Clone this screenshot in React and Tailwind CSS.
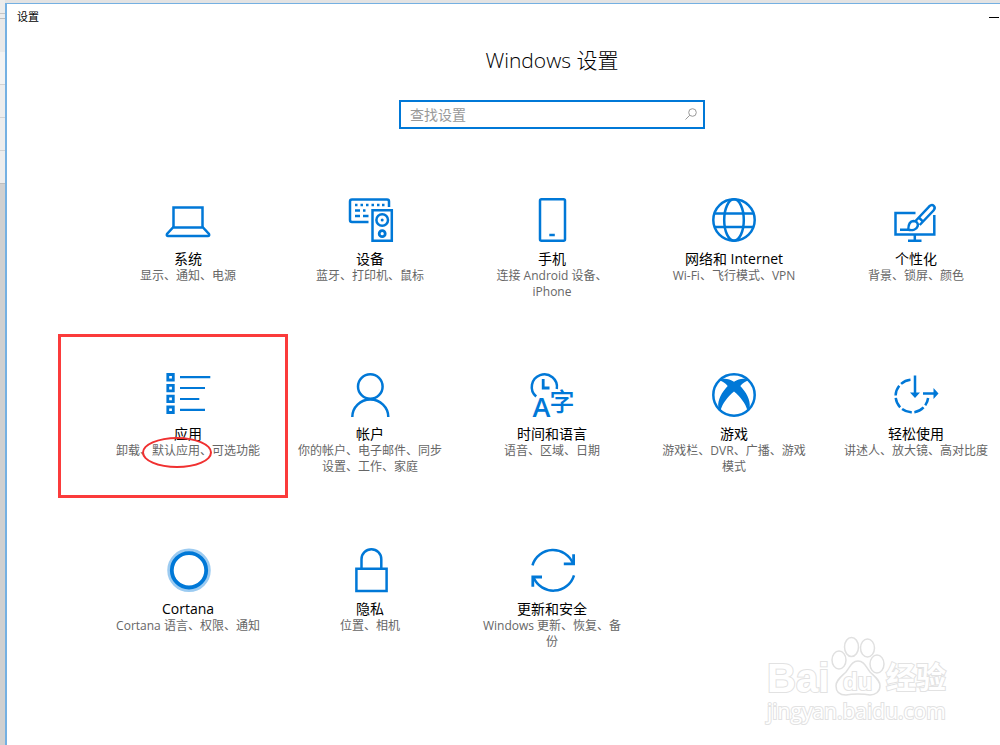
const iconPaths = {
  system: (
    <>
      <path d="M7.500 29.500V9.500h29v20" />
      <path d="M7 29.500h30l6 6.500c.6 1.200 0 2-1 2H2c-1 0-1.600-.8-1-2z" />
    </>
  ),
  devices: (
    <>
      <path d="M20.500 24H4q-2 0-2-2V3.500q0-2 2-2h35q2 0 2 2V9" />
      <path d="M7 7h2.500M12.500 7H15M18 7h2.500M23.500 7H26M29 7h2.500M34 7h2.500M7 12.500h5M15 12.500h2.500M7 18h5M15 18h5.500" />
      <path d="M24.500 12.200h19.300v30.500H24.500z" />
      <circle cx="34.200" cy="22" r="5.800" />
      <circle cx="34.200" cy="22" r="1.500" fill="currentColor" stroke="none" />
      <circle cx="34.200" cy="35.700" r="3" strokeWidth="2.800" />
    </>
  ),
  phone: (
    <>
      <rect x="10" y="1.300" width="25" height="41.500" rx="1.500" />
      <path d="M19.300 37h5.500" />
    </>
  ),
  network: (
    <>
      <circle cx="22" cy="22" r="20.700" />
      <ellipse cx="22" cy="22" rx="9.800" ry="20.700" />
      <path d="M2.500 15.500h39M2.500 29h39" />
    </>
  ),
  personalization: (
    <>
      <path d="M21.500 15H1.500v21.500h38.800V17" />
      <path d="M20.800 37v6M14 42.800h13.500" />
      <path d="M21.500 23 35.300 8.300c3.400-3 7.200.6 4.200 4.200L25.700 27M24.800 19.500l4.500 4.300" />
      <path d="M6 31.700h8.300c0-5.200 1.700-8.500 5.200-8.700 3 0 5 2.500 4.200 5.200-1 3.300-5.200 4.500-9.400 3.500" />
    </>
  ),
  apps: (
    <>
      <path d="M1.800 1.500h5.500V7H1.800zM1.800 12.300h5.500v5.500H1.800zM1.800 23.200h5.500v5.500H1.800zM1.800 34h5.500v5.500H1.800z" strokeWidth="2.800" />
      <path d="M14 4.200h30.300M14 15h25M14 26h19.300M14 36.800h25" strokeWidth="2.200" />
    </>
  ),
  accounts: (
    <>
      <circle cx="22.300" cy="13.500" r="12.300" />
      <path d="M4.300 44a18 17.500 0 0 1 36 0" />
    </>
  ),
  time: (
    <>
      <path d="M6.200 23.500A12.600 12.600 0 1 1 26.800 16" />
      <path d="M13.200 6v9h6.300" strokeWidth="2.800" />
      <text x="11.500" y="43.500" textAnchor="middle" fontSize="27" fontWeight="600" fill="currentColor" stroke="none">A</text>
      <text x="32" y="38" textAnchor="middle" fontSize="25" fontWeight="500" fill="currentColor" stroke="none">字</text>
    </>
  ),
  gaming: (
    <>
      <circle cx="22" cy="22" r="20.700" />
      <path
        d="M7.500 7.500c4-3 9.500-1.500 14.500 1.200 5-2.700 10.500-4.200 14.500-1.200-3 .5-6 2.800-8.200 5.500 6 6.500 10.200 13.500 9.400 21.500l-2.200 3C33.500 30.500 28.500 24 22 18.500 15.500 24 10.500 30.500 8.500 37.500l-2.200-3C5.500 26.500 9.700 19.500 15.700 13 13.500 10.300 10.500 8 7.500 7.500z"
        fill="currentColor"
        stroke="none"
      />
    </>
  ),
  ease: (
    <>
      <path d="M16.500 6.800A16.300 16.300 0 1 0 34.100 25" strokeDasharray="10.400 2.600" />
      <path d="M21 2.500V20M29 20.500h11" />
      <path d="M16 19.500h10L21 25zM39.500 15v11l5-5.500z" fill="currentColor" stroke="none" />
    </>
  ),
  cortana: (
    <>
      <circle cx="23" cy="22.300" r="20" stroke="#9ccbf1" strokeWidth="3.500" />
      <circle cx="23" cy="22.300" r="17.200" strokeWidth="3.800" />
    </>
  ),
  privacy: (
    <>
      <path d="M8.400 20.800h30.200V43H8.400z" />
      <path d="M13.500 20.500v-9.300a9.900 9.900 0 0 1 19.800 0v9.300" />
    </>
  ),
  update: (
    <>
      <path d="M2.500 17.300A21.500 21.500 0 0 1 43 15.500" />
      <path d="M43.600 6.300v9.600h-9.800M12 29H2.800v9.700" strokeWidth="2.800" />
      <path d="M3.600 29.500A21.500 21.500 0 0 0 44 27.300" />
    </>
  ),
}

const categories = [
  { icon: 'system', title: '系统', text: '显示、通知、电源' },
  { icon: 'devices', title: '设备', text: '蓝牙、打印机、鼠标' },
  { icon: 'phone', title: '手机', text: '连接 Android 设备、iPhone' },
  { icon: 'network', title: '网络和 Internet', text: 'Wi-Fi、飞行模式、VPN' },
  { icon: 'personalization', title: '个性化', text: '背景、锁屏、颜色' },
  { icon: 'apps', title: '应用', text: '卸载、默认应用、可选功能', marked: true },
  { icon: 'accounts', title: '帐户', text: '你的帐户、电子邮件、同步设置、工作、家庭' },
  { icon: 'time', title: '时间和语言', text: '语音、区域、日期' },
  { icon: 'gaming', title: '游戏', text: '游戏栏、DVR、广播、游戏模式' },
  { icon: 'ease', title: '轻松使用', text: '讲述人、放大镜、高对比度' },
  { icon: 'cortana', title: 'Cortana', text: 'Cortana 语言、权限、通知' },
  { icon: 'privacy', title: '隐私', text: '位置、相机' },
  { icon: 'update', title: '更新和安全', text: 'Windows 更新、恢复、备份' },
]

function CategoryIcon({ name }) {
  return (
    <svg viewBox="0 0 44 44" className="size-11 overflow-visible text-[#0078d7]" fill="none" stroke="currentColor" strokeWidth="2.500" aria-hidden="true">
      {iconPaths[name]}
    </svg>
  )
}

function Category({ icon, title, text, marked }) {
  return (
    <li className="relative">
      <a href={`#${icon}`} className="flex flex-col items-center text-center">
        <CategoryIcon name={icon} />
        <h2 className="mt-2 text-[14px] leading-[18px] text-black">{title}</h2>
        <p className="w-[146px] text-[12px] leading-[16px] text-[#666]">{text}</p>
      </a>
      {marked && (
        <>
          <span className="pointer-events-none absolute -top-[39px] -left-[39px] h-[164px] w-[230px] border-3 border-[#fb3b3b]" />
          <span className="pointer-events-none absolute top-[64px] left-[45px] h-[31px] w-[70px] rounded-[50%] border-2 border-[#f03030]" />
        </>
      )}
    </li>
  )
}

function Backdrop() {
  return (
    <div className="w-[5px] shrink-0 bg-[#d0d0d0]">
      <div className="h-[14px] border-b border-[#c4c4c4] bg-[#ececec]" />
      <div className="h-[5px] border-b border-[#bdbdbd] bg-[#ececec]" />
      <div className="h-[33px] bg-[#e9e9e9]" />
      <div className="h-[33px] border-b border-[#d2d2d2] bg-[#f3f3f3]" />
      <div className="h-[33px] border-b border-[#d2d2d2] bg-[#ededed]" />
      <div className="h-[33px] border-b border-[#d2d2d2] bg-[#ededed]" />
      <div className="h-[33px] border-b border-[#bdbdbd] bg-[#ededed]" />
    </div>
  )
}

function Watermark() {
  return (
    <div className="pointer-events-none absolute right-[54px] bottom-[21px] w-[179px] text-white [-webkit-text-stroke:2px_#e2e2e2] [paint-order:stroke_fill]">
      <div className="flex items-end justify-between font-['Liberation_Sans','Noto_Sans_CJK_SC',sans-serif] font-bold">
        <span className="text-[40px] leading-[40px]">Bai</span>
        <span className="relative flex h-[62px] w-[54px] items-end justify-center pb-1">
          <svg viewBox="0 0 54 62" className="absolute inset-0" fill="none" stroke="#e0e0e0" strokeWidth="1.500" aria-hidden="true">
            <ellipse cx="8" cy="24" rx="7" ry="9" />
            <ellipse cx="20.500" cy="11" rx="7" ry="9.500" />
            <ellipse cx="36.500" cy="12" rx="7" ry="9" />
            <ellipse cx="46" cy="28" rx="7" ry="9" />
            <path d="M27 25c6 0 8 6 12 11 5 5 10 8 10 14 0 6-5 9-10 9-5-1-8-1-12-1s-7 0-12 1c-6 0-10-3-10-9s5-9 10-14c4-5 6-11 12-11z" />
          </svg>
          <span className="relative text-[24px] leading-[24px]">du</span>
        </span>
        <span className="text-[30px] leading-[40px]">经验</span>
      </div>
      <div className="text-[21px] leading-[26px]">jingyan.baidu.com</div>
    </div>
  )
}

export default function App() {
  return (
    <div className="relative flex min-h-screen overflow-hidden bg-[#e3e3e3] font-['Open_Sans','Noto_Sans_CJK_SC',sans-serif]">
      <Backdrop />
      <div className="mt-[3px] -mr-[97px] flex-1 border-t border-l-2 border-[#74b0e2] bg-white">
        <header className="flex h-[26px] items-center justify-between pr-[80px] pl-[10px] text-[11px] text-black">
          <span>设置</span>
          <button type="button" aria-label="最小化" className="flex h-[26px] w-[46px] items-center justify-center">
            <span className="h-px w-[10px] bg-black" />
          </button>
        </header>
        <main className="flex flex-col items-center">
          <h1 className="mt-[14px] text-[21px] leading-[32px] font-light text-black">Windows 设置</h1>
          <label className="mt-[24px] flex h-[29px] w-[306px] items-center border-2 border-[#0078d7] pr-[6px] pb-px pl-[9px]">
            <input type="text" aria-label="查找设置" placeholder="查找设置" className="min-w-0 flex-1 bg-transparent text-[14px] text-black outline-none placeholder:text-[#999]" />
            <svg viewBox="0 0 12 12" className="size-3" fill="none" stroke="#999" aria-hidden="true">
              <circle cx="7.500" cy="4.500" r="3.800" />
              <path d="M4.800 7.200.5 11.500" />
            </svg>
          </label>
          <ul className="mt-[69px] grid auto-rows-[175px] grid-cols-[repeat(5,182px)]">
            {categories.map((category) => (
              <Category key={category.icon} {...category} />
            ))}
          </ul>
        </main>
      </div>
      <Watermark />
    </div>
  )
}
